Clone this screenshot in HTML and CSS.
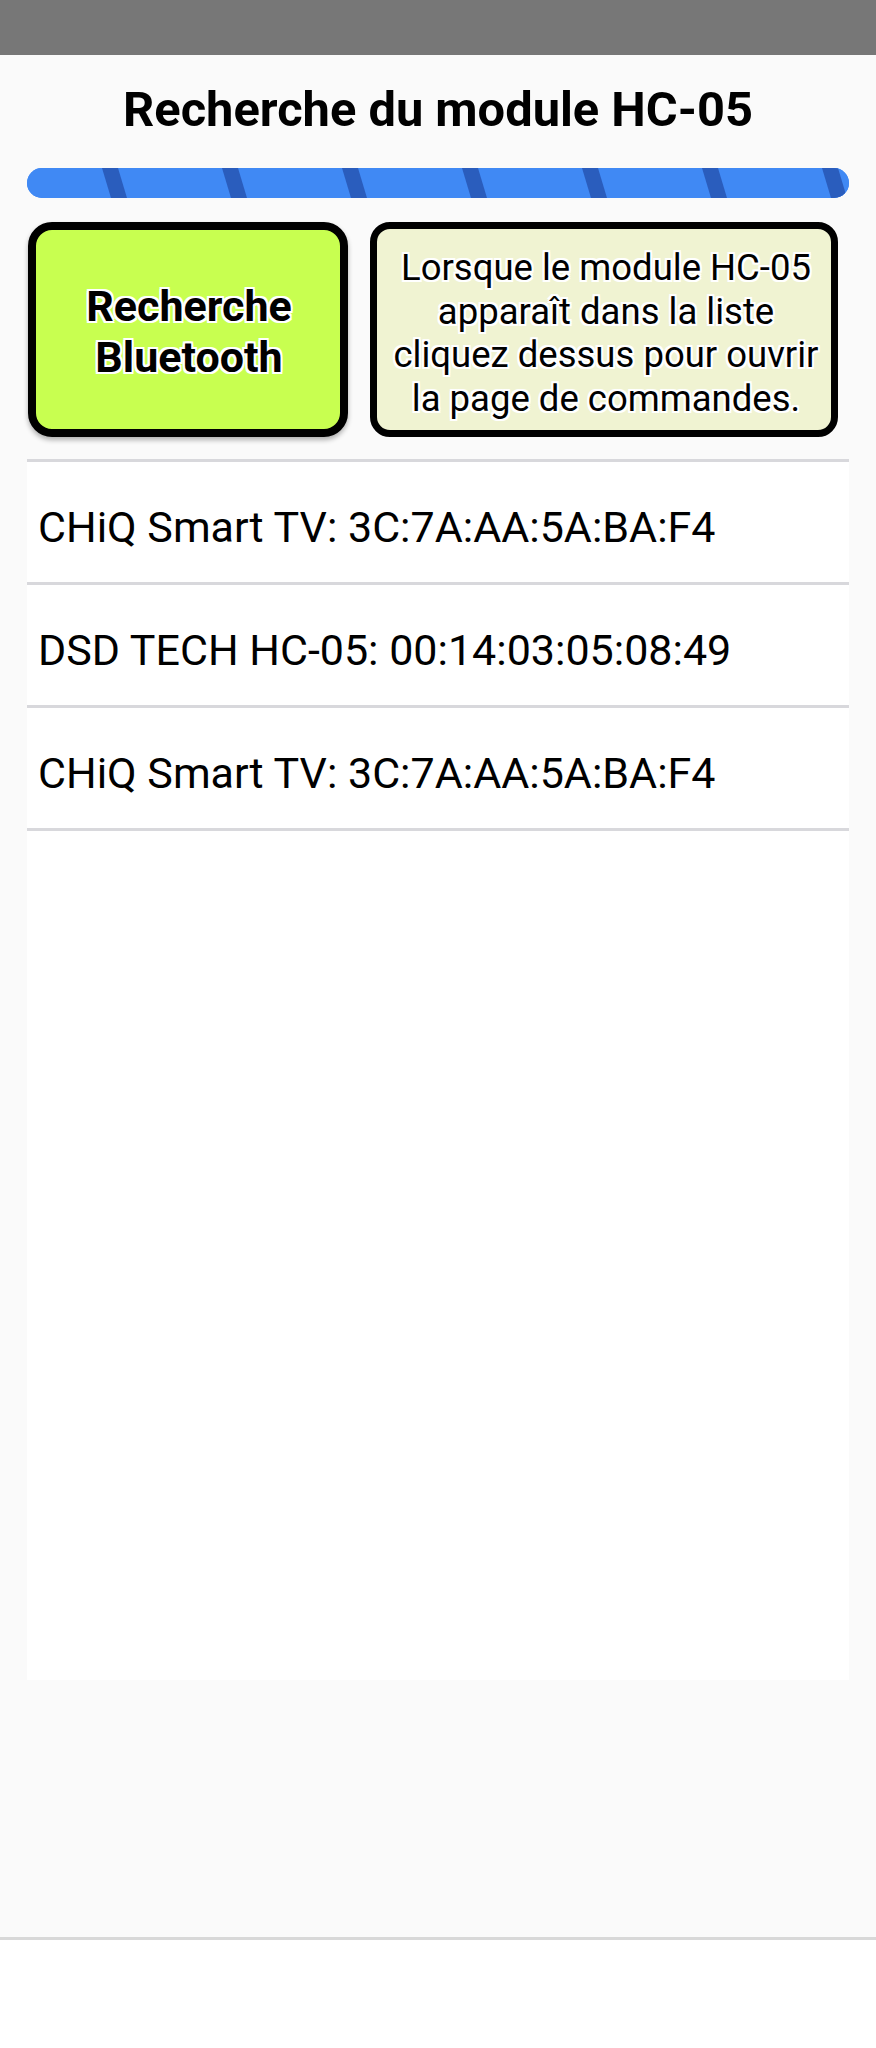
FILE: index.html
```html
<!DOCTYPE html>
<html lang="fr">
<head>
<meta charset="utf-8">
<title>Recherche du module HC-05</title>
<link rel="stylesheet" href="styles.css">
</head>
<body>
<div class="page">
  <div class="statusbar"></div>
  <h1 class="title">Recherche du module HC-05</h1>
  <div class="progress">
    <svg class="progress-svg" viewBox="0 0 822 30" width="822" height="30">
      <rect x="0" y="0" width="822" height="30" fill="#4089f4"/>
      <polygon points="75,0 91,0 100,30 84,30" fill="#2a5dbd"/>
      <polygon points="195,0 211,0 220,30 204,30" fill="#2a5dbd"/>
      <polygon points="315,0 331,0 340,30 324,30" fill="#2a5dbd"/>
      <polygon points="435,0 451,0 460,30 444,30" fill="#2a5dbd"/>
      <polygon points="555,0 571,0 580,30 564,30" fill="#2a5dbd"/>
      <polygon points="675,0 691,0 700,30 684,30" fill="#2a5dbd"/>
      <polygon points="795,0 811,0 820,30 804,30" fill="#2a5dbd"/>
    </svg>
  </div>
  <div class="actions">
    <button class="btn-search">Recherche<br>Bluetooth</button>
    <div class="hint">Lorsque le module HC-05<br>apparaît dans la liste<br>cliquez dessus pour ouvrir<br>la page de commandes.</div>
  </div>
  <ul class="devices">
    <li class="device">CHiQ Smart TV: 3C:7A:AA:5A:BA:F4</li>
    <li class="device">DSD TECH HC-05: 00:14:03:05:08:49</li>
    <li class="device">CHiQ Smart TV: 3C:7A:AA:5A:BA:F4</li>
  </ul>
  <div class="spacer"></div>
  <div class="navbar"></div>
</div>
</body>
</html>
```

FILE: styles.css
```css
* { box-sizing: border-box; }

html, body {
  margin: 0;
  padding: 0;
  background: #fafafa;
}

body {
  font-family: Roboto, "Noto Sans", "Liberation Sans", sans-serif;
  color: #000;
}

.page {
  display: flex;
  flex-direction: column;
  height: 2048px;
}

.statusbar {
  height: 55px;
  flex: none;
  background: #777777;
}

.title {
  margin: 0;
  padding-top: 27px;
  font-size: 48.8px;
  font-weight: 700;
  line-height: 56px;
  text-align: center;
  flex: none;
}

.progress {
  margin: 30px 27px 0 27px;
  height: 30px;
  border-radius: 15px;
  overflow: hidden;
  flex: none;
  background: #4089f4;
}

.progress-svg {
  display: block;
}

.actions {
  display: flex;
  gap: 22px;
  margin: 24px 0 0 28px;
  height: 215px;
  flex: none;
}

.btn-search {
  width: 320px;
  height: 215px;
  background: #c8ff50;
  border: 8px solid #000;
  border-radius: 24px;
  box-shadow: 0 3px 5px rgba(0, 0, 0, 0.3);
  font-family: Roboto, "Noto Sans", "Liberation Sans", sans-serif;
  font-size: 43px;
  font-weight: 700;
  line-height: 51px;
  color: #000;
  text-align: center;
  padding: 4px 0 0 2px;
  text-shadow:
    -2px -2px 0 #fff, 2px -2px 0 #fff, -2px 2px 0 #fff, 2px 2px 0 #fff,
    0 -2px 0 #fff, 0 2px 0 #fff, -2px 0 0 #fff, 2px 0 0 #fff;
}

.hint {
  width: 468px;
  height: 215px;
  background: #f0f3d2;
  border: 7px solid #000;
  border-radius: 20px;
  display: flex;
  align-items: center;
  justify-content: center;
  text-align: center;
  font-size: 36.5px;
  line-height: 43.5px;
  padding: 7px 0 0 4px;
  text-shadow:
    -2px -2px 0 #fff, 2px -2px 0 #fff, -2px 2px 0 #fff, 2px 2px 0 #fff,
    0 -2px 0 #fff, 0 2px 0 #fff, -2px 0 0 #fff, 2px 0 0 #fff;
}

.devices {
  list-style: none;
  margin: 22px 27px 0 27px;
  padding: 0;
  height: 1221px;
  flex: none;
  background: #fff;
  border-top: 3px solid #d8d8dc;
}

.device {
  height: 123px;
  padding: 40px 0 0 11px;
  font-size: 43px;
  line-height: 50px;
  border-bottom: 3px solid #d8d8dc;
  white-space: nowrap;
}

.spacer {
  flex: 1;
}

.navbar {
  height: 111px;
  flex: none;
  background: #fff;
  border-top: 3px solid #d8d8d8;
}
```
